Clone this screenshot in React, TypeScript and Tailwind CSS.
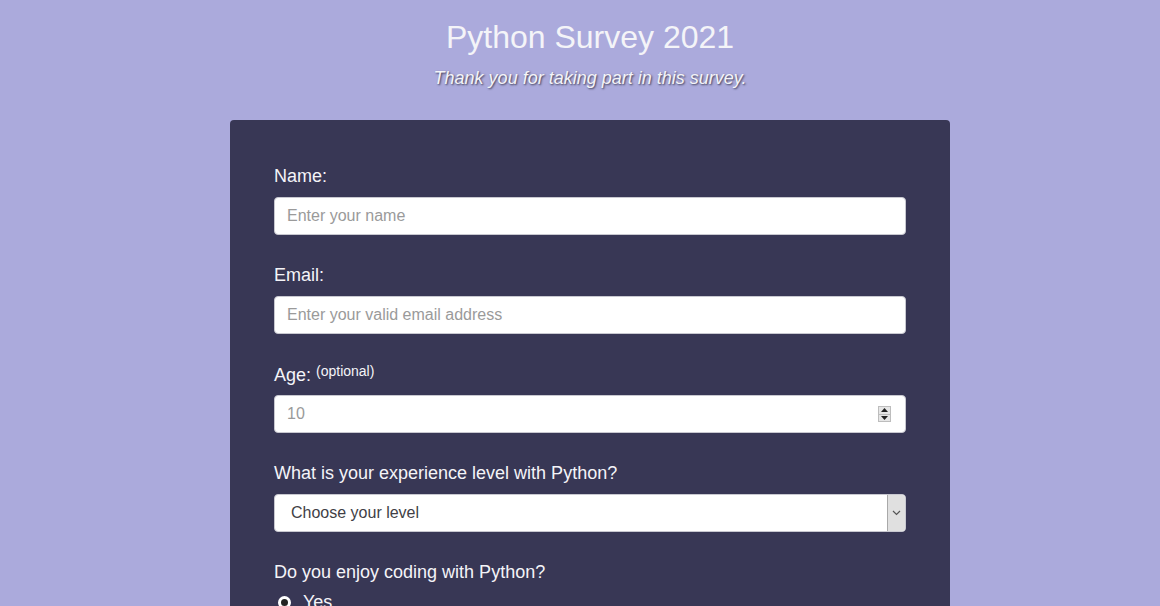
export default function App() {
  return (
    <div className="min-h-screen w-full bg-[#abaadc] font-['Liberation_Sans',Arial,sans-serif] overflow-hidden h-[606px] pl-[20px]">
      <header className="text-center pt-[19px]">
        <h1 className="text-[32px] leading-[37px] text-[#f4f4f8]">Python Survey 2021</h1>
        <p className="mt-[12px] text-[18px] leading-[21px] italic text-[#f4f4f8] [text-shadow:1px_1px_2px_#3c3b55]">
          Thank you for taking part in this survey.
        </p>
      </header>

      <form className="mx-auto mt-[31px] w-[720px] rounded-[4px] bg-[#383755] px-[44px] pt-[46px] pb-10 text-[#f4f4f8]">
        <div className="mb-[30px]">
          <label className="block text-[18px] leading-[21px]">Name:</label>
          <input
            className="mt-[10px] block h-[38px] w-full rounded-[4px] border border-[#c8c8d0] bg-white px-[12px] text-[16px] text-[#333] placeholder:text-[#9a9a9a] outline-none"
            placeholder="Enter your name"
          />
        </div>

        <div className="mb-[30px]">
          <label className="block text-[18px] leading-[21px]">Email:</label>
          <input
            className="mt-[10px] block h-[38px] w-full rounded-[4px] border border-[#c8c8d0] bg-white px-[12px] text-[16px] text-[#333] placeholder:text-[#9a9a9a] outline-none"
            placeholder="Enter your valid email address"
          />
        </div>

        <div className="mb-[30px]">
          <label className="flex h-[21px] items-start text-[18px] leading-[21px]">
            <span className="mt-[1px]">Age:</span>
            <span className="ml-[5px] text-[14px] leading-[16px] -mt-[1px]">(optional)</span>
          </label>
          <div className="mt-[10px] flex h-[38px] w-full items-center rounded-[4px] border border-[#c8c8d0] bg-white pl-[12px] pr-[14px] text-[16px]">
            <span className="flex-1 text-[#9a9a9a]">10</span>
            <div className="flex h-[16px] w-[13px] flex-col border border-[#bdbdbd] bg-[#e6e6e6]">
              <div className="flex flex-1 items-center justify-center border-b border-[#bdbdbd]">
                <svg width="7" height="4" viewBox="0 0 7 4"><path d="M3.5 0L7 4H0z" fill="#222" /></svg>
              </div>
              <div className="flex flex-1 items-center justify-center">
                <svg width="7" height="4" viewBox="0 0 7 4"><path d="M0 0h7L3.5 4z" fill="#222" /></svg>
              </div>
            </div>
          </div>
        </div>

        <div className="mb-[30px]">
          <label className="block text-[18px] leading-[21px]">What is your experience level with Python?</label>
          <div className="mt-[10px] flex h-[38px] w-full items-stretch rounded-[4px] border border-[#c8c8d0] bg-white text-[16px]">
            <span className="flex flex-1 items-center pl-[16px] text-[#3f3f46]">Choose your level</span>
            <div className="flex w-[18px] items-center justify-center rounded-r-[3px] border-l border-[#a9a9a9] bg-[#e0e0e0]">
              <svg width="9" height="6" viewBox="0 0 9 6"><path d="M1 1l3.5 3.5L8 1" fill="none" stroke="#555" strokeWidth="1.2" /></svg>
            </div>
          </div>
        </div>

        <div>
          <label className="block text-[18px] leading-[21px]">Do you enjoy coding with Python?</label>
          <div className="mt-[9px] flex items-center text-[18px] leading-[21px]">
            <span className="ml-[4px] mr-[12px] block h-[13px] w-[13px] rounded-full border-[3px] border-white bg-[#222]"></span>
            Yes
          </div>
        </div>
      </form>
    </div>
  );
}
